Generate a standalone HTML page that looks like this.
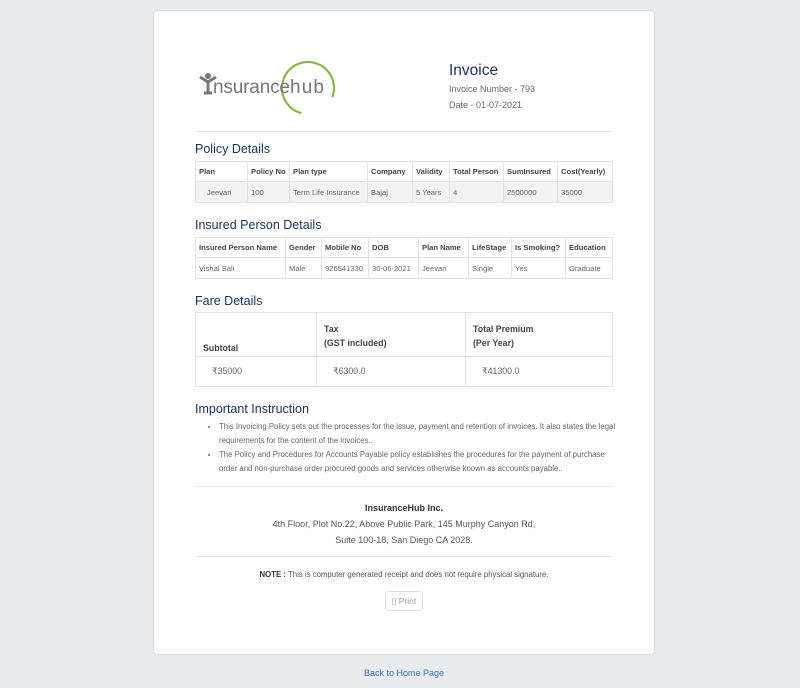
<!DOCTYPE html>
<html><head><meta charset="utf-8"><style>
*{margin:0;padding:0;box-sizing:border-box}
body{width:800px;height:688px;background:#e9ebef;font-family:"Liberation Sans",sans-serif;position:relative;overflow:hidden;color:#555}
.card{position:absolute;left:153px;top:10px;width:502px;height:645px;background:#fff;border:1px solid #d9dce1;border-radius:4px}
.a{position:absolute}
h2{position:absolute;left:195px;font-size:12.5px;font-weight:normal;color:#16325c}
table{position:absolute;left:195px;width:418px;border-collapse:collapse;font-size:7.6px}
td,th{border:1px solid #dee2e6;padding:0 3px;text-align:left;white-space:nowrap}
th{font-weight:bold;color:#444}
td{color:#666}
.hr{position:absolute;left:195px;width:418px;height:1px;background:#e6e6e6}
ul{position:absolute;left:219px;width:400px;font-size:7.8px;line-height:14px;color:#666}
</style></head><body>
<div class="card"></div>
<svg class="a" style="left:198px;top:60px" width="145" height="60">
<circle cx="110" cy="28" r="26" fill="none" stroke="#8cb545" stroke-width="2.2" stroke-dasharray="125 40" transform="rotate(105 110 28)"/>
<circle cx="10" cy="16" r="3" fill="#777"/>
<path d="M2 17 L10 22 L18 17 M10 22 V33 M6 33 H14" stroke="#777" stroke-width="3" fill="none"/>
<text x="15" y="33" font-family="Liberation Sans" font-size="19" fill="#777" textLength="77">nsurance</text>
<text x="92" y="33" font-family="Liberation Sans" font-size="19" fill="#777" textLength="34">hub</text>
</svg>
<div class="a" style="left:449px;top:62px;font-size:15.5px;color:#16325c">Invoice</div>
<div class="a" style="left:449px;top:84px;font-size:9px;color:#666">Invoice Number - 793</div>
<div class="a" style="left:449px;top:100px;font-size:9px;color:#666">Date - 01-07-2021</div>
<div class="hr" style="top:131px"></div>
<h2 style="top:142px">Policy Details</h2>
<table style="top:161px">
<tr style="height:20px"><th style="width:52px">Plan</th><th style="width:42px">Policy No</th><th style="width:78px">Plan type</th><th style="width:45px">Company</th><th style="width:37px">Validity</th><th style="width:54px">Total Person</th><th style="width:54px">SumInsured</th><th>Cost(Yearly)</th></tr>
<tr style="height:21px;background:#f2f2f2"><td style="padding-left:11px">Jeevan</td><td>100</td><td>Term Life Insurance</td><td>Bajaj</td><td>5 Years</td><td>4</td><td>2500000</td><td>35000</td></tr>
</table>
<h2 style="top:218px">Insured Person Details</h2>
<table style="top:237px">
<tr style="height:20px"><th style="width:90px">Insured Person Name</th><th style="width:36px">Gender</th><th style="width:47px">Mobile No</th><th style="width:50px">DOB</th><th style="width:50px">Plan Name</th><th style="width:43px">LifeStage</th><th style="width:54px">Is Smoking?</th><th>Education</th></tr>
<tr style="height:21px"><td>Vishal Sali</td><td>Male</td><td>926541330</td><td>30-06-2021</td><td>Jeevan</td><td>Single</td><td>Yes</td><td>Graduate</td></tr>
</table>
<h2 style="top:294px">Fare Details</h2>
<table style="top:312px;font-size:8.8px;border:1px solid #dee2e6">
<tr style="height:44px"><th style="width:121px;padding:14px 0 0 7px;vertical-align:top;line-height:14px"><br>Subtotal</th><th style="width:149px;padding:9px 0 0 7px;vertical-align:top;line-height:14px">Tax<br>(GST included)</th><th style="padding:9px 0 0 7px;vertical-align:top;line-height:14px">Total Premium<br>(Per Year)</th></tr>
<tr style="height:30px"><td style="padding-left:16px">₹35000</td><td style="padding-left:16px">₹6300.0</td><td style="padding-left:16px">₹41300.0</td></tr>
</table>
<h2 style="top:402px">Important Instruction</h2>
<ul style="top:420px"><li>This Invoicing Policy sets out the processes for the issue, payment and retention of invoices. It also states the legal requirements for the content of the invoices..</li><li>The Policy and Procedures for Accounts Payable policy establishes the procedures for the payment of purchase order and non-purchase order procured goods and services otherwise known as accounts payable..</li></ul>
<div class="hr" style="top:486px"></div>
<div class="a" style="left:195px;width:418px;top:500px;text-align:center;font-size:9px;line-height:16px;color:#555"><b style="color:#333">InsuranceHub Inc.</b><br>4th Floor, Plot No.22, Above Public Park, 145 Murphy Canyon Rd,<br>Suite 100-18, San Diego CA 2028.</div>
<div class="hr" style="top:556px"></div>
<div class="a" style="left:195px;width:418px;top:570px;text-align:center;font-size:7.8px;color:#555"><b style="color:#333">NOTE :</b> This is computer generated receipt and does not require physical signature.</div>
<div class="a" style="left:385px;top:591px;width:38px;height:20px;border:1px solid #ddd;border-radius:3px;font-size:8.5px;color:#999;text-align:center;line-height:18px">▯ Print</div>
<div class="a" style="left:0;width:808px;top:668px;text-align:center;font-size:9px;color:#3a6fc4">Back to Home Page</div>
</body></html>
